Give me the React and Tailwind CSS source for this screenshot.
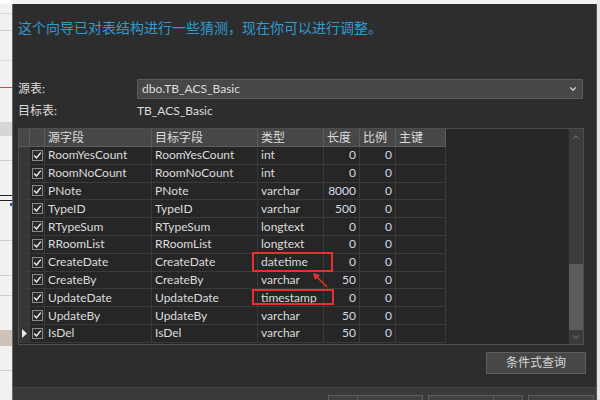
import { ChevronDown, ChevronUp } from 'lucide-react';

const FONT = { fontFamily: 'Lato, "Noto Sans CJK SC", sans-serif' };

const rows = [
  ['RoomYesCount', 'RoomYesCount', 'int', 0, 0],
  ['RoomNoCount', 'RoomNoCount', 'int', 0, 0],
  ['PNote', 'PNote', 'varchar', 8000, 0],
  ['TypeID', 'TypeID', 'varchar', 500, 0],
  ['RTypeSum', 'RTypeSum', 'longtext', 0, 0],
  ['RRoomList', 'RRoomList', 'longtext', 0, 0],
  ['CreateDate', 'CreateDate', 'datetime', 0, 0],
  ['CreateBy', 'CreateBy', 'varchar', 50, 0],
  ['UpdateDate', 'UpdateDate', 'timestamp', 0, 0],
  ['UpdateBy', 'UpdateBy', 'varchar', 50, 0],
  ['IsDel', 'IsDel', 'varchar', 50, 0],
];

// background window peeking out on the left
function LeftStrip() {
  return (
    <svg width="13" height="400" className="shrink-0 block">
      <rect x="0" y="0" width="13" height="400" fill="#f1f1f1" />
      <rect x="0" y="0" width="13" height="4" fill="#ffffff" />
      <rect x="0" y="13" width="13" height="1" fill="#d8d8d8" />
      <rect x="0" y="30" width="13" height="1" fill="#d0d0d0" />
      <rect x="0" y="60" width="13" height="1" fill="#dcdcdc" />
      <rect x="0" y="87" width="13" height="1" fill="#e04040" />
      <rect x="0" y="122" width="13" height="14" fill="#d6d6d6" />
      <rect x="0" y="160" width="13" height="1" fill="#d0d0d0" />
      <rect x="0" y="195" width="13" height="1" fill="#222" />
      <rect x="0" y="200" width="13" height="1" fill="#222" />
      <rect x="10" y="203" width="2" height="3" fill="#2255cc" />
      <rect x="0" y="240" width="13" height="1" fill="#d0d0d0" />
      <rect x="0" y="275" width="13" height="1" fill="#d0d0d0" />
      <rect x="0" y="295" width="13" height="1" fill="#d0d0d0" />
      <rect x="0" y="330" width="13" height="16" fill="#cfc2b8" />
      <rect x="0" y="370" width="13" height="1" fill="#d0d0d0" />
      <rect x="12" y="4" width="1" height="396" fill="#6a6a6a" />
    </svg>
  );
}

function Check() {
  return (
    <div className="w-[11px] h-[11px] border border-[#8a8a8a] bg-[#2a2a2a] flex items-center justify-center">
      <svg width="9" height="9" viewBox="0 0 9 9">
        <path d="M1.2 4.6 L3.5 7 L7.8 1.6" fill="none" stroke="#f0f0f0" strokeWidth="1.4" />
      </svg>
    </div>
  );
}

function Cell({ w, right, children, className = '' }) {
  return (
    <div
      className={`${w} shrink-0 h-full border-r border-[#3a3a3a] px-[3px] flex items-center overflow-hidden whitespace-nowrap ${right ? 'justify-end' : ''} ${className}`}
    >
      {children}
    </div>
  );
}

function HeadCell({ w, children }) {
  return (
    <div className={`${w} shrink-0 h-full border-r border-[#5c5c5c] px-[3px] flex items-center whitespace-nowrap bg-[#474747]`}>
      {children}
    </div>
  );
}

export default function App() {
  return (
    <div className="relative w-[600px] h-[400px] flex overflow-hidden bg-[#f1f1f1] text-[12px] text-[#dcdcdc]" style={FONT}>
      <LeftStrip />

      <div className="mt-[4px] w-[584px] shrink-0 flex flex-col bg-[#2d2d2d] border-r border-[#555]">
        {/* Title */}
        <div className="pl-[5px] pt-[13px] h-[60px] text-[14px] leading-[20px] text-[#2e9bd2]" style={{ fontFamily: '"Noto Sans CJK SC", sans-serif' }}>
          这个向导已对表结构进行一些猜测，现在你可以进行调整。
        </div>

        {/* Source / target */}
        <div className="pl-[5px] pr-[13px] mt-[15px] flex items-center h-[20px]">
          <div className="w-[119px] shrink-0">源表:</div>
          <div className="flex-1 h-[20px] bg-[#474747] border border-[#5c5c5c] flex items-center justify-between pl-[4px] pr-[4px]">
            <span>dbo.TB_ACS_Basic</span>
            <ChevronDown size={10} strokeWidth={3} color="#cfcfcf" />
          </div>
        </div>
        <div className="pl-[5px] mt-[2px] flex items-center h-[20px]">
          <div className="w-[119px] shrink-0">目标表:</div>
          <div>TB_ACS_Basic</div>
        </div>

        {/* Grid */}
        <div className="ml-[5px] mt-[7px] w-[566px] h-[217px] border border-[#4e4e4e] bg-[#262626] flex">
          <div className="w-[427px] flex flex-col">
            <div className="h-[18px] flex border-b border-[#5c5c5c]">
              <HeadCell w="w-[11px]" />
              <HeadCell w="w-[15px]" />
              <HeadCell w="w-[107px]">源字段</HeadCell>
              <HeadCell w="w-[106px]">目标字段</HeadCell>
              <HeadCell w="w-[66px]">类型</HeadCell>
              <HeadCell w="w-[36px]">长度</HeadCell>
              <HeadCell w="w-[36px]">比例</HeadCell>
              <HeadCell w="w-[50px]">主键</HeadCell>
            </div>
            {rows.map((r, i) => (
              <div key={r[0]} className="h-[17.8px] flex border-b border-[#3a3a3a]">
                <div className="w-[11px] shrink-0 h-full bg-[#363636] border-r border-[#3a3a3a] flex items-center justify-center">
                  {i === rows.length - 1 && (
                    <svg width="5" height="9" viewBox="0 0 5 9">
                      <path d="M0 0 L5 4.5 L0 9 Z" fill="#e8e8e8" />
                    </svg>
                  )}
                </div>
                <div className="w-[15px] shrink-0 h-full border-r border-[#3a3a3a] flex items-center justify-center">
                  <Check />
                </div>
                <Cell w="w-[107px]">{r[0]}</Cell>
                <Cell w="w-[106px]">{r[1]}</Cell>
                <Cell w="w-[66px]">{r[2]}</Cell>
                <Cell w="w-[36px]" right className="text-[#d2dce6]">{r[3]}</Cell>
                <Cell w="w-[36px]" right className="text-[#d2dce6]">{r[4]}</Cell>
                <Cell w="w-[50px]" />
              </div>
            ))}
          </div>
          <div className="flex-1" />
          {/* Scrollbar */}
          <div className="w-[15px] shrink-0 flex flex-col bg-[#3b3b3b] border-l border-[#2a2a2a]">
            <div className="h-[15px] flex items-center justify-center">
              <ChevronUp size={10} strokeWidth={2} color="#8a8a8a" />
            </div>
            <div className="flex-1" />
            <div className="h-[66px] bg-[#5c5c5c]" />
            <div className="h-[14px] flex items-center justify-center">
              <ChevronDown size={10} strokeWidth={2} color="#8a8a8a" />
            </div>
          </div>
        </div>

        {/* Condition query button */}
        <div className="mt-[7px] pr-[10px] flex justify-end">
          <div className="w-[100px] h-[22px] bg-[#474747] border border-[#5e5e5e] flex items-center justify-center text-[#d8d8d8]">
            条件式查询
          </div>
        </div>

        {/* Bottom button bar */}
        <div className="mt-auto h-[13px] bg-[#3a3a3a] border-t border-[#444] flex items-end">
          <div className="flex w-full h-[5px] pl-[315px] gap-[5px]">
            <div className="w-[95px] h-[6px] border border-b-0 border-[#5e5e5e] bg-[#404040] flex">
              <div className="w-[29px] border-r border-[#5e5e5e]" />
            </div>
            <div className="w-[95px] h-[6px] border border-b-0 border-[#5e5e5e] bg-[#404040] flex">
              <div className="w-[65px] border-r border-[#5e5e5e]" />
            </div>
            <div className="w-[66px] h-[6px] border border-b-0 border-[#5e5e5e] bg-[#404040]" />
          </div>
        </div>
      </div>

      <div className="flex-1 bg-[#e6e6e6]" />

      {/* Annotations */}
      <div className="absolute left-[252px] top-[252px] w-[81px] h-[20px] border-2 border-[#e8302e]" />
      <div className="absolute left-[252px] top-[289px] w-[82px] h-[16px] border-2 border-[#e8302e]" />
      <svg className="absolute left-[306px] top-[266px]" width="26" height="26" viewBox="0 0 26 26">
        <line x1="21" y1="21" x2="9" y2="9" stroke="#e8302e" strokeWidth="1.6" />
        <path d="M7 7 L14 9 L9 14 Z" fill="#e8302e" />
      </svg>
    </div>
  );
}
